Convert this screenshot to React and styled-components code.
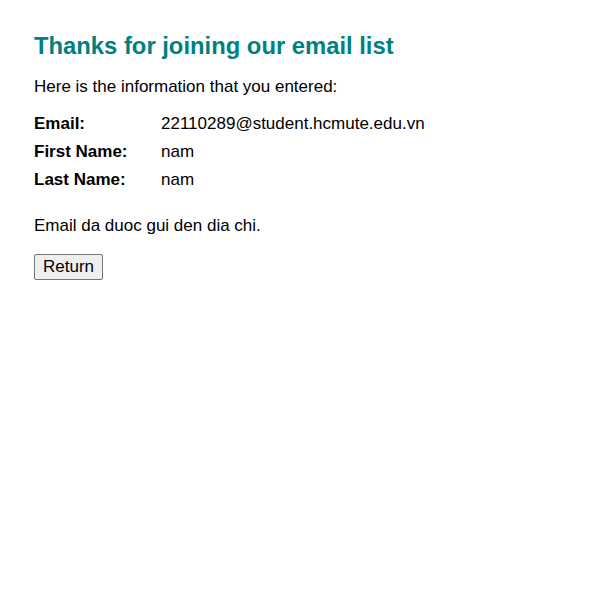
import React from "react";
import styled, { createGlobalStyle } from "styled-components";

const GlobalStyle = createGlobalStyle`
  html, body {
    margin: 0;
    padding: 0;
    background: #ffffff;
  }
  body {
    font-family: Arial, "Liberation Sans", sans-serif;
    font-size: 17px;
    color: #000000;
  }
`;

const Page = styled.main`
  padding: 32px 34px 0 34px;
`;

const Title = styled.h1`
  margin: 0 0 17px 0;
  font-size: 23.8px;
  font-weight: bold;
  color: teal;
`;

const Text = styled.p`
  margin: 0 0 ${(p) => p.$gap || 0}px 0;
  font-size: 17px;
`;

const Info = styled.div`
  display: grid;
  grid-template-columns: 127px auto;
  row-gap: 8px;
  margin-top: 17px;
  margin-bottom: 26px;
`;

const Label = styled.span`
  font-weight: bold;
`;

const Value = styled.span``;

const Button = styled.button`
  font-family: Arial, "Liberation Sans", sans-serif;
  font-size: 17px;
  padding: 2px 8px;
  background: #efefef;
  border: 1px solid #767676;
  border-radius: 2px;
  color: #000;
`;

const rows = [
  { label: "Email:", value: "22110289@student.hcmute.edu.vn" },
  { label: "First Name:", value: "nam" },
  { label: "Last Name:", value: "nam" },
];

const App = () => {
  return (
    <Page>
      <GlobalStyle />
      <Title>Thanks for joining our email list</Title>
      <Text>Here is the information that you entered:</Text>
      <Info>
        {rows.map((row) => (
          <React.Fragment key={row.label}>
            <Label>{row.label}</Label>
            <Value>{row.value}</Value>
          </React.Fragment>
        ))}
      </Info>
      <Text $gap={18}>Email da duoc gui den dia chi.</Text>
      <Button>Return</Button>
    </Page>
  );
};

export default App;
